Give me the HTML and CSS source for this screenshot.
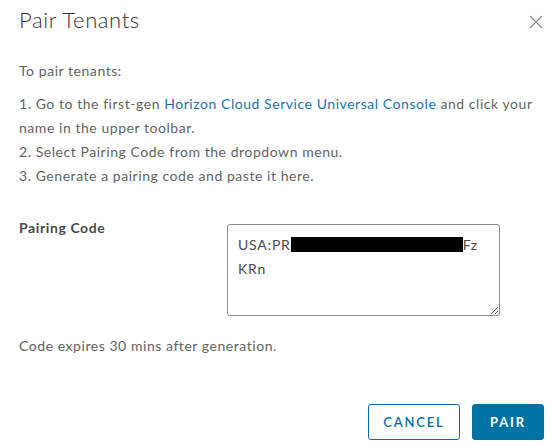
FILE: index.html
```html
<!DOCTYPE html>
<html lang="en">
<head>
    <meta charset="UTF-8">
    <meta name="viewport" content="width=device-width, initial-scale=1.0">
    <title>Pair Tenants</title>
    <link rel="stylesheet" href="styles.css">
</head>
<body>
    <div class="modal">
        <div class="modal-header">
            <h3 class="modal-title">Pair Tenants</h3>
            <button class="close" aria-label="Close">
                <svg width="14" height="14" viewBox="0 0 14 14">
                    <path d="M1 1 L13 13 M13 1 L1 13" stroke="#8a8a8a" stroke-width="1.1" fill="none"/>
                </svg>
            </button>
        </div>
        <div class="modal-body">
            <p>To pair tenants:</p>
            <p>1. Go to the first-gen <a href="#">Horizon Cloud Service Universal Console</a> and click your name in the upper toolbar.<br>
                2. Select Pairing Code from the dropdown menu.<br>
                3. Generate a pairing code and paste it here.</p>

            <div class="form-row">
                <label class="form-label">Pairing Code</label>
                <div class="code-box" role="textbox">USA:PR<span class="redact"></span>Fz<br>KRn</div>
            </div>

            <p class="hint">Code expires 30 mins after generation.</p>
        </div>
        <div class="modal-footer">
            <button class="btn btn-outline">Cancel</button>
            <button class="btn btn-primary">Pair</button>
        </div>
    </div>
</body>
</html>
```

FILE: styles.css
```css
body {
    margin: 0;
    background-color: #fff;
    font-family: Lato, "Open Sans", sans-serif;
    color: #636363;
}
.modal {
    padding: 4px 13px 0 19px;
}
.modal-header {
    display: flex;
    justify-content: space-between;
    align-items: flex-start;
}
.modal-title {
    margin: 0;
    font-size: 22px;
    font-weight: 300;
    line-height: 32px;
    letter-spacing: 0.6px;
    color: #313131;
}
.close {
    background: none;
    border: none;
    padding: 0;
    margin: 11px 1px 0 0;
    width: 14px;
    height: 14px;
    cursor: pointer;
}
.close svg {
    display: block;
}
.modal-body {
    margin-top: 23px;
}
.modal-body p {
    margin: 0 0 9px;
    font-size: 14px;
    line-height: 24px;
    letter-spacing: 0.55px;
}
.modal-body a {
    color: #1a74a8;
    text-decoration: none;
}
.form-row {
    display: flex;
    align-items: flex-start;
    margin-top: 28px;
}
.form-label {
    width: 208px;
    flex-shrink: 0;
    font-size: 14px;
    font-weight: 700;
    line-height: 24px;
    color: #4a4a4a;
    letter-spacing: 0.6px;
}
.code-box {
    margin-top: 8px;
    width: 251px;
    height: 74px;
    padding: 8px 10px;
    border: 1px solid #8c8c8c;
    border-radius: 3px;
    font-size: 14px;
    line-height: 24px;
    color: #4a4a4a;
    letter-spacing: 0.8px;
    overflow: auto;
    resize: both;
}
.redact {
    display: inline-block;
    width: 172px;
    height: 15px;
    background-color: #000;
    vertical-align: -2px;
}
.modal-body .hint {
    margin-top: 18px;
}
.modal-footer {
    display: flex;
    justify-content: flex-end;
    gap: 12px;
    margin-top: 46px;
}
.btn {
    height: 36px;
    border-radius: 3px;
    font-family: Lato, sans-serif;
    font-size: 13px;
    text-transform: uppercase;
    letter-spacing: 0.14em;
    cursor: pointer;
}
.btn-outline {
    width: 92px;
    background-color: #fff;
    border: 1px solid #0072a3;
    color: #0072a3;
    font-weight: 600;
}
.btn-primary {
    width: 72px;
    background-color: #0072a3;
    border: 1px solid #0072a3;
    color: #fff;
    font-weight: 700;
}
```
